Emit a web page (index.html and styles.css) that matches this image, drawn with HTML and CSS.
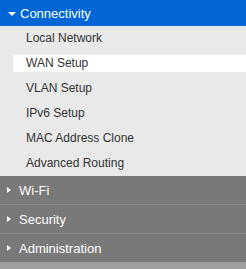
FILE: index.html
```html
<!DOCTYPE html>
<html lang="en">

<head>
    <meta charset="UTF-8">
    <meta name="viewport" content="width=device-width, initial-scale=1.0">
    <title>Menu</title>
    <link rel="stylesheet" href="styles.css">
</head>

<body>
    <div class="menu">
        <div class="section open">
            <div class="section-title">
                <span class="arrow-down"></span>
                <span>Connectivity</span>
            </div>
            <ul class="sub-list">
                <li>Local Network</li>
                <li class="active">WAN Setup</li>
                <li>VLAN Setup</li>
                <li>IPv6 Setup</li>
                <li>MAC Address Clone</li>
                <li>Advanced Routing</li>
            </ul>
        </div>
        <div class="section">
            <div class="section-title">
                <span class="arrow-right"></span>
                <span>Wi-Fi</span>
            </div>
        </div>
        <div class="section">
            <div class="section-title">
                <span class="arrow-right"></span>
                <span>Security</span>
            </div>
        </div>
        <div class="section">
            <div class="section-title">
                <span class="arrow-right"></span>
                <span>Administration</span>
            </div>
        </div>
    </div>
</body>

</html>
```

FILE: styles.css
```css
body {
    margin: 0;
    padding: 0;
    font-family: "Liberation Sans", Arial, sans-serif;
    background-color: #a0a0a0;
}

.menu {
    display: flex;
    flex-direction: column;
}

.section-title {
    display: flex;
    align-items: center;
    height: 28px;
    padding-left: 7px;
    background-color: #797979;
    border-bottom: 1px solid #8b8b8b;
    color: white;
    font-size: 13px;
}

.section:last-child .section-title {
    border-bottom: none;
}

.open .section-title {
    height: 26px;
    padding-left: 8px;
    background-color: #0066d5;
    border-bottom: none;
}

.arrow-down {
    width: 0;
    height: 0;
    border-left: 4px solid transparent;
    border-right: 4px solid transparent;
    border-top: 4px solid white;
    margin-right: 4px;
    margin-top: 1px;
}

.arrow-right {
    width: 0;
    height: 0;
    border-top: 3px solid transparent;
    border-bottom: 3px solid transparent;
    border-left: 4px solid white;
    margin-right: 8px;
}

.sub-list {
    list-style: none;
    margin: 0;
    padding: 4px 0;
    background-color: #e9e9e9;
    display: flex;
    flex-direction: column;
    gap: 8px;
}

.sub-list li {
    height: 17px;
    line-height: 16px;
    margin-left: 13px;
    padding-left: 13px;
    font-size: 12px;
    color: #333333;
}

.sub-list li.active {
    background-color: white;
}
```
